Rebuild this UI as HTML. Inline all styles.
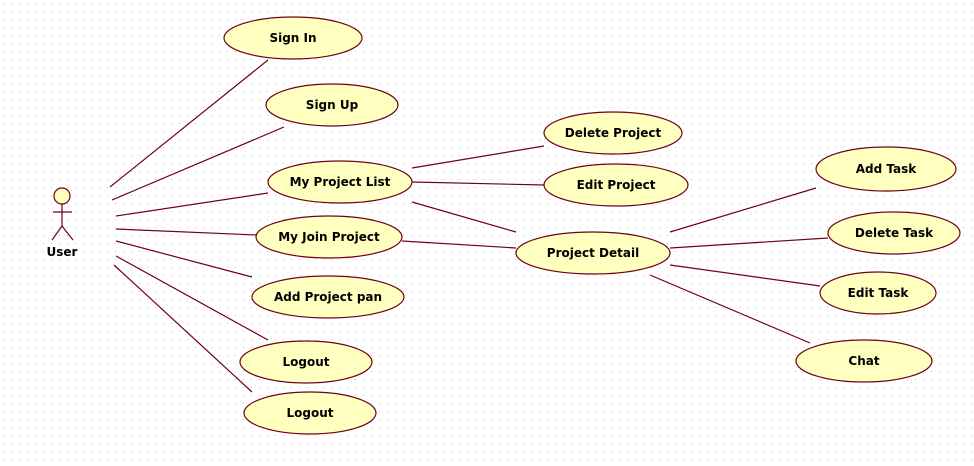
<!DOCTYPE html>
<html><head><meta charset="utf-8"><style>
html,body{margin:0;padding:0;width:974px;height:466px;overflow:hidden;background:#fff;}
svg{display:block}
text{font-family:"DejaVu Sans","Liberation Sans",sans-serif;font-weight:bold;font-size:12px;fill:#000;text-anchor:middle}
</style></head><body>
<svg width="974" height="466" xmlns="http://www.w3.org/2000/svg">
<defs><pattern id="d" width="8" height="8" patternUnits="userSpaceOnUse"><rect x="3" y="3" width="1" height="1" fill="#c4c4c4"/></pattern></defs>
<rect width="974" height="466" fill="url(#d)"/>
<g stroke="#700018" stroke-width="1.2" fill="none">
<line x1="110" y1="187" x2="268" y2="60"/>
<line x1="112" y1="200" x2="284" y2="127"/>
<line x1="116" y1="216" x2="268" y2="193"/>
<line x1="116" y1="229" x2="257" y2="235"/>
<line x1="116" y1="241" x2="252" y2="277"/>
<line x1="116" y1="256" x2="268" y2="340"/>
<line x1="114" y1="265" x2="252" y2="392"/>
<line x1="412" y1="168" x2="544" y2="146"/>
<line x1="412" y1="182" x2="544" y2="185"/>
<line x1="412" y1="202" x2="516" y2="232"/>
<line x1="402" y1="241" x2="516" y2="248"/>
<line x1="670" y1="232" x2="816" y2="188"/>
<line x1="670" y1="248" x2="828" y2="238"/>
<line x1="670" y1="265" x2="820" y2="286"/>
<line x1="650" y1="275" x2="810" y2="343"/>
</g>
<g fill="#ffffc0" stroke="#700018" stroke-width="1.2">
<ellipse cx="293" cy="38" rx="69" ry="21"/>
<ellipse cx="332" cy="105" rx="66" ry="21"/>
<ellipse cx="340" cy="182" rx="72" ry="21"/>
<ellipse cx="329" cy="237" rx="73" ry="21"/>
<ellipse cx="328" cy="297" rx="76" ry="21"/>
<ellipse cx="306" cy="362" rx="66" ry="21"/>
<ellipse cx="310" cy="413" rx="66" ry="21"/>
<ellipse cx="613" cy="133" rx="69" ry="21"/>
<ellipse cx="616" cy="185" rx="72" ry="21"/>
<ellipse cx="593" cy="253" rx="77" ry="21"/>
<ellipse cx="886" cy="169" rx="70" ry="22"/>
<ellipse cx="894" cy="233" rx="66" ry="21"/>
<ellipse cx="878" cy="293" rx="58" ry="21"/>
<ellipse cx="864" cy="361" rx="68" ry="21"/>
<circle cx="62" cy="196" r="8"/>
</g>
<g stroke="#700018" stroke-width="1.2" fill="none">
<line x1="62" y1="204" x2="62" y2="226"/>
<line x1="53" y1="212" x2="72" y2="212"/>
<line x1="62" y1="226" x2="52" y2="240"/>
<line x1="62" y1="226" x2="73" y2="240"/>
</g>
<text x="62" y="256">User</text>
<text x="293" y="42">Sign In</text>
<text x="332" y="109">Sign Up</text>
<text x="340" y="186">My Project List</text>
<text x="329" y="241">My Join Project</text>
<text x="328" y="301">Add Project pan</text>
<text x="306" y="366">Logout</text>
<text x="310" y="417">Logout</text>
<text x="613" y="137">Delete Project</text>
<text x="616" y="189">Edit Project</text>
<text x="593" y="257">Project Detail</text>
<text x="886" y="173">Add Task</text>
<text x="894" y="237">Delete Task</text>
<text x="878" y="297">Edit Task</text>
<text x="864" y="365">Chat</text>
</svg>
</body></html>
